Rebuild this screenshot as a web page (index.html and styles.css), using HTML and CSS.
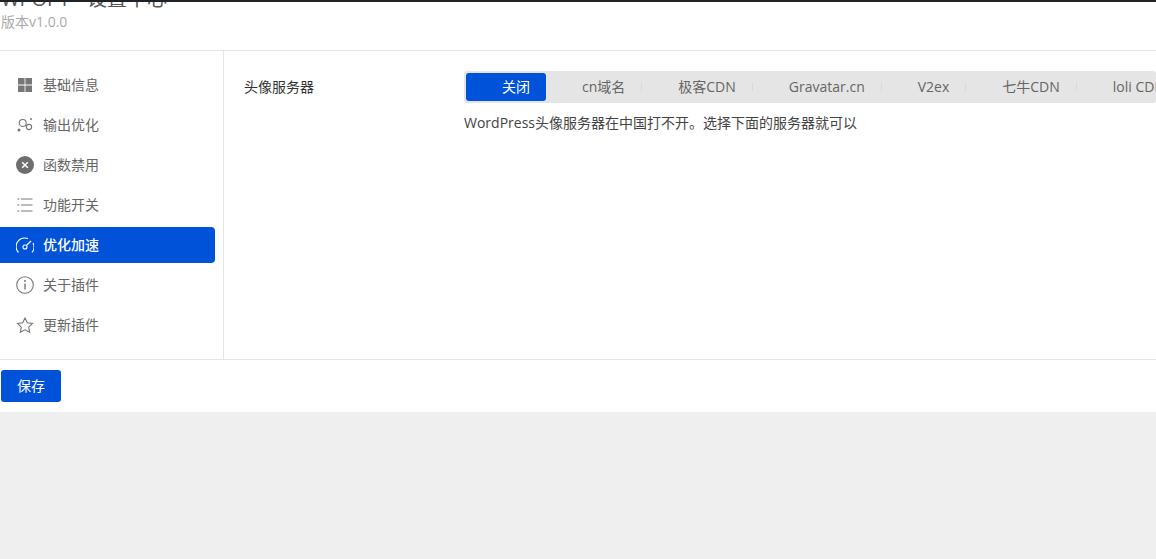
FILE: index.html
```html
<!DOCTYPE html>
<html lang="zh-CN">
<head>
    <meta charset="UTF-8">
    <title>WPOPT 设置中心</title>
    <link rel="stylesheet" href="styles.css">
</head>
<body>
    <div class="panel">
        <div class="header">
            <h1>WPOPT - 设置中心</h1>
            <p class="version">版本v1.0.0</p>
        </div>
        <div class="main">
            <ul class="menu">
                <li class="menu-item">
                    <svg viewBox="0 0 18 18"><path fill="#777" d="M2 2h6.600v6.600H2zM9.400 2H16v6.600H9.400zM2 9.400h6.600V16H2zM9.400 9.400H16V16H9.400z"/></svg>
                    基础信息
                </li>
                <li class="menu-item">
                    <svg viewBox="0 0 18 18" fill="none" stroke="#777" stroke-width="1.1"><circle cx="6.700" cy="7" r="3.500"/><circle cx="13" cy="11" r="2.600"/><circle cx="3" cy="14" r="1.500" fill="#777" stroke="none"/><circle cx="15" cy="3" r="1" fill="#777" stroke="none"/></svg>
                    输出优化
                </li>
                <li class="menu-item">
                    <svg viewBox="0 0 18 18"><circle cx="9" cy="9" r="9" fill="#6e6e6e"/><path d="M6.200 6.200l5.600 5.600M11.800 6.200l-5.600 5.600" stroke="#fff" stroke-width="1.500" fill="none"/></svg>
                    函数禁用
                </li>
                <li class="menu-item">
                    <svg viewBox="0 0 18 18" fill="none" stroke="#777" stroke-width="1.1"><path d="M1.500 3h2M5 3h11.500M1.500 9h2M5 9h11.500M1.500 15h2M5 15h11.500"/></svg>
                    功能开关
                </li>
                <li class="menu-item active">
                    <svg viewBox="0 0 18 18" fill="none" stroke="#fff" stroke-width="1.1"><path d="M2.500 16.500A8.600 8.600 0 0 1 12 2.600M17 7A8.600 8.600 0 0 1 16 16.500"/><circle cx="9" cy="11" r="2"/><path d="M10.400 9.500L15 5"/></svg>
                    优化加速
                </li>
                <li class="menu-item">
                    <svg viewBox="0 0 18 18" fill="none" stroke="#777" stroke-width="1.1"><circle cx="9" cy="9" r="8.300"/><path d="M9 7.600v6" stroke-width="1.400"/><circle cx="9" cy="5" r="1" fill="#777" stroke="none"/></svg>
                    关于插件
                </li>
                <li class="menu-item">
                    <svg viewBox="0 0 18 18" fill="none" stroke="#777" stroke-width="1.1"><path d="M9 2l2.300 4.800 5.200.7-3.800 3.600 1 5.200L9 13.800l-4.700 2.500 1-5.200-3.800-3.600 5.200-.7z"/></svg>
                    更新插件
                </li>
            </ul>
            <div class="content">
                <div class="field">
                    <label class="field-label">头像服务器</label>
                    <div class="field-body">
                        <div class="tabs">
                            <span class="tab active">关闭</span>
                            <span class="tab">cn域名</span>
                            <span class="tab">极客CDN</span>
                            <span class="tab">Gravatar.cn</span>
                            <span class="tab">V2ex</span>
                            <span class="tab">七牛CDN</span>
                            <span class="tab">loli CDN</span>
                        </div>
                        <p class="hint">WordPress头像服务器在中国打不开。选择下面的服务器就可以</p>
                    </div>
                </div>
            </div>
        </div>
        <div class="footer">
            <button class="button">保存</button>
        </div>
    </div>
</body>
</html>
```

FILE: styles.css
```css
* {
    margin: 0;
    padding: 0;
    box-sizing: border-box;
}

html, body {
    height: 559px;
    overflow: hidden;
}

body {
    font-family: "Open Sans", "Noto Sans CJK SC", sans-serif;
    font-size: 14px;
    color: #333;
    background: #efefef;
    border-top: 2px solid #1d2327;
}

.panel {
    background: white;
    height: 410px;
    display: flex;
    flex-direction: column;
}

.header {
    height: 49px;
    padding-left: 1px;
    border-bottom: 1px solid #e5e5e5;
    overflow: hidden;
}

h1 {
    font-size: 20px;
    font-weight: 400;
    line-height: 24px;
    margin-top: -15px;
    color: #555;
}

.version {
    font-size: 14px;
    line-height: 20px;
    margin-top: 1px;
    color: #aaa;
}

.main {
    height: 309px;
    display: flex;
    border-bottom: 1px solid #e5e5e5;
}

.menu {
    width: 224px;
    flex-shrink: 0;
    list-style: none;
    padding: 16px 8px 0 0;
    border-right: 1px solid #e5e5e5;
}

.menu-item {
    height: 36px;
    margin-bottom: 4px;
    padding-left: 16px;
    display: flex;
    align-items: center;
    gap: 9px;
    font-size: 14px;
    line-height: 20px;
    color: #666;
    border-radius: 0 4px 4px 0;
}

.menu-item svg {
    width: 18px;
    height: 18px;
}

.menu-item.active {
    background: #0052d9;
    color: white;
    font-weight: 500;
}

.content {
    flex: 1;
    min-width: 0;
    padding: 20px 0 0 20px;
}

.field {
    display: flex;
}

.field-label {
    width: 220px;
    flex-shrink: 0;
    font-size: 14px;
    line-height: 32px;
    color: #333;
}

.field-body {
    flex: 1;
    min-width: 0;
}

.tabs {
    display: flex;
    height: 32px;
    padding: 2px;
    background: #e5e5e5;
    border-radius: 3px;
    white-space: nowrap;
    overflow: hidden;
}

.tab {
    position: relative;
    flex-shrink: 0;
    padding: 0 17px 0 36px;
    line-height: 28px;
    color: #666;
}

.tab::after {
    content: "";
    position: absolute;
    right: 0;
    top: 10px;
    height: 8px;
    border-right: 1px solid #d8d8d8;
}

.tab.active {
    padding-right: 16px;
    background: #0052d9;
    color: white;
    border-radius: 3px;
}

.tab.active::after {
    display: none;
}

.hint {
    margin-top: 10px;
    line-height: 20px;
    color: #444;
}

.footer {
    padding: 10px 0 0 1px;
}

.button {
    display: block;
    width: 60px;
    height: 32px;
    padding-bottom: 2px;
    background: #0052d9;
    color: white;
    border: none;
    border-radius: 3px;
    font-family: inherit;
    font-size: 14px;
}
```
